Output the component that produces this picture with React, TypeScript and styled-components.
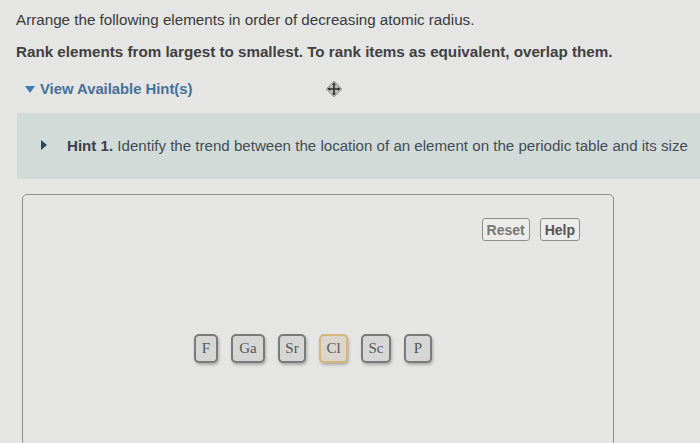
import React from "react";
import styled, { createGlobalStyle } from "styled-components";

const GlobalStyle = createGlobalStyle`
  html, body {
    margin: 0;
    padding: 0;
    background: #e5e5e3;
    overflow: hidden;
  }
  body {
    font-family: "Liberation Sans", Arial, sans-serif;
    color: #3c3c3c;
  }
`;

const elements = [
  { label: "F", width: 24 },
  { label: "Ga", width: 34 },
  { label: "Sr", width: 28 },
  { label: "Cl", width: 29, active: true },
  { label: "Sc", width: 30 },
  { label: "P", width: 28 },
];

const MoveIcon = () => (
  <svg width="18" height="18" viewBox="0 0 18 18">
    <path d="M9 1 L17 9 L9 17 L1 9 Z" fill="#b9b9b9" stroke="#9a9a9a" strokeWidth="1" strokeLinejoin="round" />
    <path d="M9 3.5 V14.5 M3.5 9 H14.5" stroke="#2e2e2e" strokeWidth="1.6" />
    <path d="M9 2.5 L7.2 5 H10.8 Z M9 15.5 L7.2 13 H10.8 Z M2.5 9 L5 7.2 V10.8 Z M15.5 9 L13 7.2 V10.8 Z" fill="#2e2e2e" />
  </svg>
);

const App = () => {
  return (
    <Page>
      <GlobalStyle />
      <Instruction>
        Arrange the following elements in order of decreasing atomic radius.
      </Instruction>
      <RankText>
        Rank elements from largest to smallest. To rank items as equivalent,
        overlap them.
      </RankText>
      <HintToggle>
        <Caret $dir="down" />
        <HintLink>View Available Hint(s)</HintLink>
        <MoveSlot>
          <MoveIcon />
        </MoveSlot>
      </HintToggle>
      <HintBand>
        <Caret $dir="right" />
        <HintText>
          <b>Hint 1.</b> Identify the trend between the location of an element
          on the periodic table and its size
        </HintText>
      </HintBand>
      <RankBox>
        <Toolbar>
          <ToolButton $light>Reset</ToolButton>
          <ToolButton>Help</ToolButton>
        </Toolbar>
        <TileRow>
          {elements.map((el) => (
            <Tile key={el.label} $active={el.active} style={{ width: el.width }}>
              {el.label}
            </Tile>
          ))}
        </TileRow>
      </RankBox>
    </Page>
  );
};

export default App;

const Page = styled.div`
  padding: 10px 0 0 16px;
  height: 443px;
  box-sizing: border-box;
  overflow: hidden;
`;

const Instruction = styled.p`
  margin: 0;
  font-size: 15.2px;
  line-height: 20px;
  color: #3a3a3a;
  white-space: nowrap;
`;

const RankText = styled(Instruction)`
  margin-top: 12px;
  font-weight: 700;
  color: #404040;
`;

const HintToggle = styled.div`
  margin-top: 17px;
  height: 20px;
  display: flex;
  align-items: center;
  padding-left: 9px;
`;

const Caret = styled.span<{ $dir: "down" | "right" }>`
  width: 0;
  height: 0;
  ${(p) =>
    p.$dir === "down"
      ? `border-left: 5px solid transparent;
         border-right: 5px solid transparent;
         border-top: 7px solid #3c79b0;
         margin-right: 5px;`
      : `border-top: 5px solid transparent;
         border-bottom: 5px solid transparent;
         border-left: 6px solid #2d4660;
         margin-right: 20px;`}
`;

const HintLink = styled.span`
  font-size: 14.8px;
  font-weight: 700;
  color: #44709a;
`;

const MoveSlot = styled.span`
  margin-left: 133px;
  display: flex;
  align-items: center;
`;

const HintBand = styled.div`
  margin: 14px 0 0 1px;
  height: 66px;
  box-sizing: border-box;
  background: #d3dbd9;
  display: flex;
  align-items: center;
  padding-left: 24px;
  padding-bottom: 2px;
  white-space: nowrap;
`;

const HintText = styled.span`
  font-size: 15.1px;
  color: #3f4c57;
  b {
    color: #34424f;
  }
`;

const RankBox = styled.div`
  margin: 15px 0 0 6px;
  width: 592px;
  height: 252px;
  box-sizing: border-box;
  border: 1px solid #8d8d8d;
  border-radius: 5px;
  padding: 23px 33px 0 0;
  display: flex;
  flex-direction: column;
`;

const Toolbar = styled.div`
  display: flex;
  justify-content: flex-end;
  gap: 10px;
`;

const ToolButton = styled.button<{ $light?: boolean }>`
  height: 23px;
  padding: 0 4px;
  font-family: "Liberation Sans", Arial, sans-serif;
  font-size: 14px;
  font-weight: 700;
  color: ${(p) => (p.$light ? "#777777" : "#555555")};
  background: #ebebea;
  border: 1.5px solid #8e8e8e;
  border-radius: 3px;
`;

const TileRow = styled.div`
  margin-top: 93px;
  padding-left: 171px;
  display: flex;
  gap: 13px;
`;

const Tile = styled.div<{ $active?: boolean }>`
  height: 29px;
  box-sizing: border-box;
  display: flex;
  align-items: center;
  justify-content: center;
  font-family: "Liberation Serif", "Times New Roman", serif;
  font-size: 15px;
  color: #555555;
  background: ${(p) => (p.$active ? "#dbd6cd" : "#d6d6d6")};
  border: 2px solid ${(p) => (p.$active ? "#d8b57c" : "#7a7a7a")};
  border-radius: 5px;
  box-shadow: 1px 2px 3px rgba(0, 0, 0, 0.25);
`;
